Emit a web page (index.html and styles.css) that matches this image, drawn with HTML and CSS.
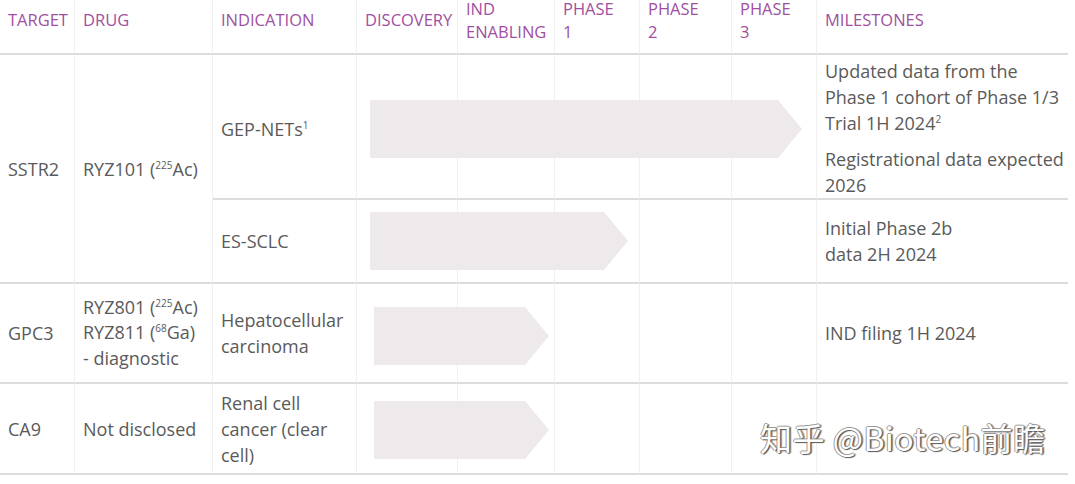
FILE: index.html
```html
<!DOCTYPE html>
<html lang="en">
<head>
<meta charset="utf-8">
<title>Pipeline</title>
<link rel="stylesheet" href="styles.css">
</head>
<body>
<div class="pipeline">
  <div class="cell head"><p>Target</p></div>
  <div class="cell head"><p>Drug</p></div>
  <div class="cell head"><p>Indication</p></div>
  <div class="cell head"><p>Discovery</p></div>
  <div class="cell head"><p>IND<br>Enabling</p></div>
  <div class="cell head"><p>Phase<br>1</p></div>
  <div class="cell head"><p>Phase<br>2</p></div>
  <div class="cell head"><p>Phase<br>3</p></div>
  <div class="cell head last"><p>Milestones</p></div>

  <div class="cell span2"><p>SSTR2</p></div>
  <div class="cell span2"><p>RYZ101 (<sup>225</sup>Ac)</p></div>
  <div class="cell"><p class="gep">GEP-NETs<sup>1</sup></p></div>
  <div class="cell"><div class="arrow arrow-gep"></div></div>
  <div class="cell"></div>
  <div class="cell"></div>
  <div class="cell"></div>
  <div class="cell"></div>
  <div class="cell last">
    <p class="first">Updated data from the<br>Phase 1 cohort of Phase 1/3<br>Trial 1H 2024<sup>2</sup></p>
    <p class="gap">Registrational data expected<br>2026</p>
  </div>

  <div class="cell"><p>ES-SCLC</p></div>
  <div class="cell"><div class="arrow arrow-es"></div></div>
  <div class="cell"></div>
  <div class="cell"></div>
  <div class="cell"></div>
  <div class="cell"></div>
  <div class="cell last"><p>Initial Phase 2b<br>data 2H 2024</p></div>

  <div class="cell"><p>GPC3</p></div>
  <div class="cell drug"><p>RYZ801 (<sup>225</sup>Ac)<br>RYZ811 (<sup>68</sup>Ga)<br>- diagnostic</p></div>
  <div class="cell"><p>Hepatocellular<br>carcinoma</p></div>
  <div class="cell"><div class="arrow arrow-gpc"></div></div>
  <div class="cell"></div>
  <div class="cell"></div>
  <div class="cell"></div>
  <div class="cell"></div>
  <div class="cell last"><p>IND filing 1H 2024</p></div>

  <div class="cell"><p>CA9</p></div>
  <div class="cell"><p>Not disclosed</p></div>
  <div class="cell"><p>Renal cell<br>cancer (clear<br>cell)</p></div>
  <div class="cell"><div class="arrow arrow-ca"></div></div>
  <div class="cell"></div>
  <div class="cell"></div>
  <div class="cell"></div>
  <div class="cell"></div>
  <div class="cell last"></div>

  <div class="watermark">知乎 @Biotech前瞻</div>
</div>
</body>
</html>
```

FILE: styles.css
```css
html, body {
  margin: 0;
  padding: 0;
  background: #ffffff;
}

body {
  font-family: "Open Sans", "Noto Sans", sans-serif;
  color: #5a5a5a;
}

.pipeline {
  position: relative;
  display: grid;
  grid-template-columns: 75px 138px 144px 101px 97px 85px 92px 85px 251px;
  grid-template-rows: 55px 145px 84px 100px 91px;
  width: 1068px;
}

.cell {
  box-sizing: border-box;
  display: flex;
  flex-direction: column;
  justify-content: center;
  padding: 0 0 0 8px;
  border-right: 1px solid #f0f0f0;
  border-bottom: 2px solid #dcdcdc;
  font-size: 18px;
  line-height: 26px;
  white-space: nowrap;
}

.cell.last {
  border-right: none;
}

.cell.drug {
  line-height: 25.5px;
}

.head {
  color: #a0509f;
  font-size: 16.5px;
  line-height: 23px;
  text-transform: uppercase;
  padding-bottom: 14px;
}

.span2 {
  grid-row: span 2;
}

p {
  margin: 0;
}

p.first {
  margin-top: 3px;
}

p.gap {
  margin-top: 10px;
}

p.gep {
  margin-top: 5px;
}

sup {
  font-size: 10px;
  line-height: 0;
  vertical-align: 7px;
}

.arrow {
  flex: none;
  height: 58px;
  background: #eeeaeb;
  clip-path: polygon(0 0, calc(100% - 24px) 0, 100% 50%, calc(100% - 24px) 100%, 0 100%);
}

.arrow-gep {
  width: 432px;
  margin-left: 5px;
  margin-top: 5px;
}

.arrow-es {
  width: 258px;
  margin-left: 5px;
}

.arrow-gpc {
  width: 175px;
  margin-left: 9px;
  margin-top: 6px;
}

.arrow-ca {
  width: 175px;
  margin-left: 9px;
  margin-top: 3px;
}

.watermark {
  position: absolute;
  left: 760px;
  top: 417px;
  font-family: "Noto Sans CJK SC", "Noto Sans", sans-serif;
  font-size: 32px;
  line-height: 40px;
  letter-spacing: 0.5px;
  color: #ffffff;
  white-space: nowrap;
  text-shadow: 1px 1px 1px #555555, -1px 0 0 #9a9a9a, 0 -1px 0 #9a9a9a, 2px 0 1px #8a8a8a;
}
```
